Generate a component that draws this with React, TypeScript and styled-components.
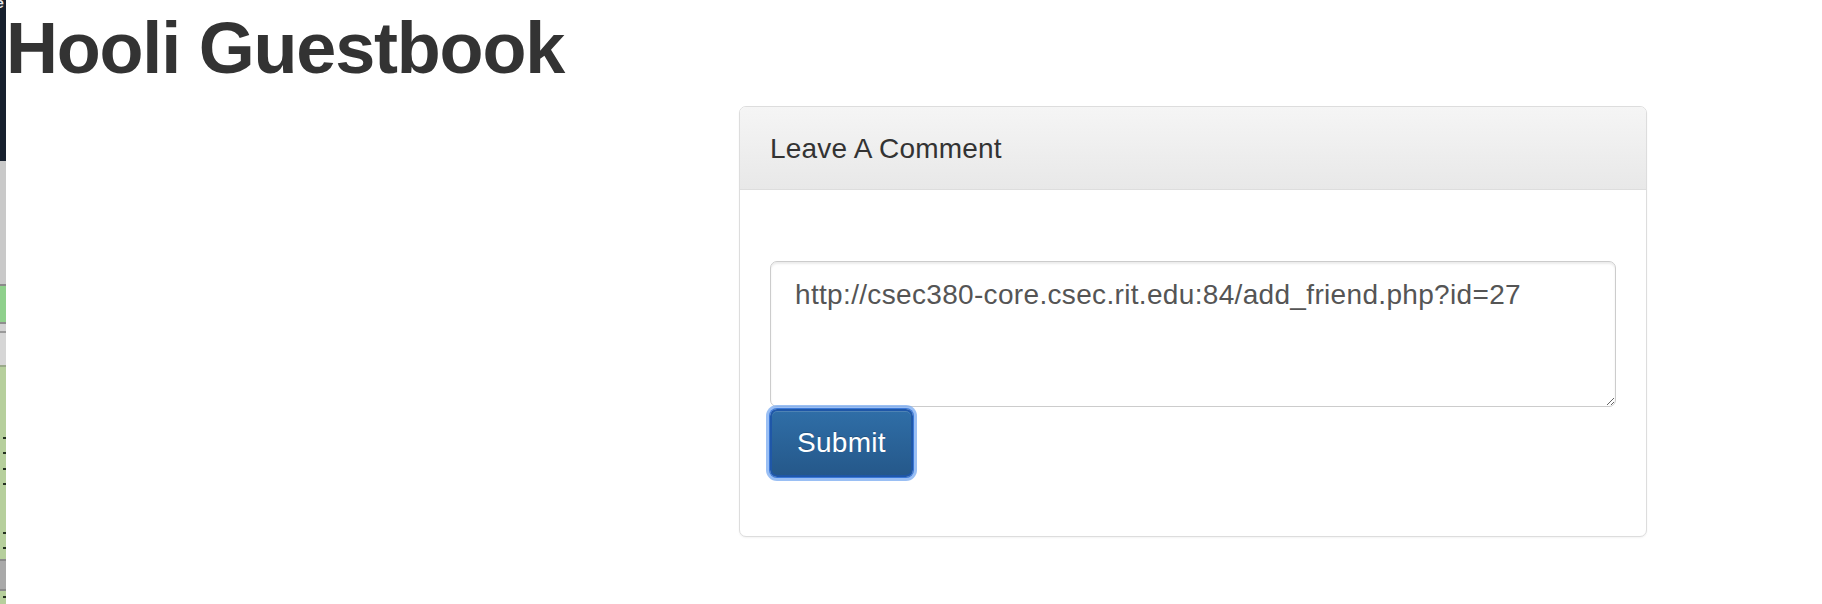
import React from "react";
import styled, { createGlobalStyle } from "styled-components";

const Global = createGlobalStyle`
  html, body { margin: 0; padding: 0; background: #fff; }
  body { font-family: "Liberation Sans", Arial, Helvetica, sans-serif; color: #333; }
  * { box-sizing: border-box; }
`;

const Page = styled.div`
  position: relative;
  width: 1822px;
  height: 604px;
  overflow: hidden;
  padding-top: 9px;
`;

const Title = styled.h1`
  margin: 0;
  padding-left: 6px;
  font-family: "Liberation Sans", Arial, sans-serif;
  font-weight: 700;
  font-size: 72px;
  line-height: 79px;
  letter-spacing: -1.2px;
  color: #333;
`;

const PanelRow = styled.div`
  display: flex;
  padding-left: 739px;
  margin-top: 18px;
`;

const Panel = styled.section`
  width: 908px;
  border: 1px solid #ddd;
  border-radius: 7px;
  background: #fff;
  box-shadow: 0 1px 2px rgba(0, 0, 0, 0.05);
  overflow: hidden;
`;

const PanelHeading = styled.div`
  padding: 22px 30px 20px;
  height: 83px;
  background: linear-gradient(to bottom, #f5f5f5 0%, #e8e8e8 100%);
  border-bottom: 1px solid #ddd;
  font-size: 28px;
  line-height: 40px;
  letter-spacing: 0.2px;
  color: #333;
`;

const PanelBody = styled.div`
  padding: 71px 30px 59px;
  display: flex;
  flex-direction: column;
  align-items: flex-start;
  gap: 2px;
`;

const CommentBox = styled.textarea`
  display: block;
  width: 846px;
  height: 146px;
  padding: 13px 24px 12px;
  font-family: "Liberation Sans", Arial, sans-serif;
  font-size: 28px;
  line-height: 40px;
  letter-spacing: 0.33px;
  color: #555;
  background: #fff;
  border: 1px solid #ccc;
  border-radius: 7px;
  box-shadow: inset 0 2px 2px rgba(0, 0, 0, 0.075);
  resize: vertical;
  outline: none;
`;

const SubmitButton = styled.button`
  height: 68px;
  padding: 0 25px;
  font-family: "Liberation Sans", Arial, sans-serif;
  font-size: 28px;
  line-height: 64px;
  letter-spacing: 0.3px;
  color: #fff;
  text-shadow: 0 -1px 0 rgba(0, 0, 0, 0.2);
  background: linear-gradient(to bottom, #2f6ea7 0%, #25588a 100%);
  border: 2px solid #1f57a8;
  border-radius: 7px;
  box-shadow: 0 0 0 1px #3b78d8, 0 0 0 4px rgba(120, 170, 240, 0.75),
    inset 0 1px 0 rgba(255, 255, 255, 0.15);
  cursor: pointer;
`;

const Strip = styled.div`
  position: absolute;
  left: 0;
  top: 0;
  width: 6px;
  height: 604px;
  display: flex;
  flex-direction: column;
  overflow: hidden;
  box-shadow: inset -1px 0 0 rgba(0, 0, 0, 0.12);
`;

const Seg = styled.div<{ $h: number; $c: string; $line?: string }>`
  position: relative;
  flex: 0 0 ${(p) => p.$h}px;
  background: ${(p) => p.$c};
  ${(p) => (p.$line ? `border-top: 2px solid ${p.$line};` : "")}
`;

const Glyph = styled.span`
  position: absolute;
  left: -4px;
  top: -5px;
  font-family: "Liberation Sans", Arial, sans-serif;
  font-size: 14px;
  font-weight: 700;
  color: #e8eaee;
`;

const Mark = styled.span<{ $y: number }>`
  position: absolute;
  right: 0;
  top: ${(p) => p.$y}px;
  width: 3px;
  height: 2px;
  background: #23301f;
`;

export default function App() {
  return (
    <>
      <Global />
      <Page>
        <Title>Hooli Guestbook</Title>
        <PanelRow>
          <Panel>
            <PanelHeading>Leave A Comment</PanelHeading>
            <PanelBody>
              <CommentBox
                rows={3}
                defaultValue="http://csec380-core.csec.rit.edu:84/add_friend.php?id=27"
              />
              <SubmitButton type="button">Submit</SubmitButton>
            </PanelBody>
          </Panel>
        </PanelRow>
        <Strip>
          <Seg $h={161} $c="#17202e">
            <Glyph>e</Glyph>
          </Seg>
          <Seg $h={123} $c="#c9c9c9" />
          <Seg $h={38} $c="#8fd08c" $line="#8a8a8a" />
          <Seg $h={9} $c="#d2d2d2" $line="#8e8e8e" />
          <Seg $h={34} $c="#d6d6d6" $line="#9a9a9a" />
          <Seg $h={194} $c="#b6cf9c" $line="#9aa98a">
            <Mark $y={70} />
            <Mark $y={85} />
            <Mark $y={101} />
            <Mark $y={116} />
            <Mark $y={165} />
            <Mark $y={180} />
          </Seg>
          <Seg $h={30} $c="#a9a9a9" $line="#8a8a8a" />
          <Seg $h={15} $c="#b6cf9c" $line="#8a8a8a">
            <Mark $y={5} />
          </Seg>
        </Strip>
      </Page>
    </>
  );
}
